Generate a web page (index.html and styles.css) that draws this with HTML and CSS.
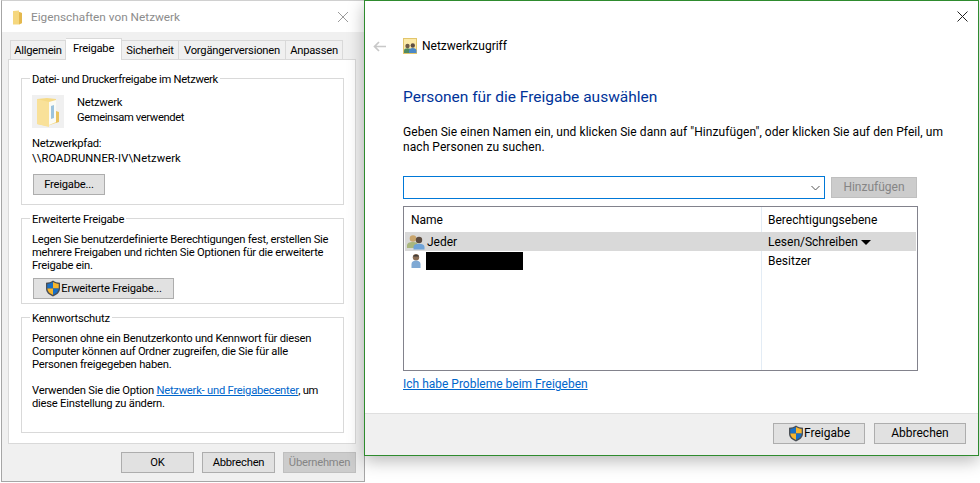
FILE: index.html
```html
<!DOCTYPE html>
<html lang="de">
<head>
<meta charset="utf-8">
<title>Netzwerk</title>
<link rel="stylesheet" href="styles.css">
</head>
<body>
<svg class="defs" width="0" height="0" aria-hidden="true">
  <defs>
    <symbol id="shield" viewBox="0 0 16 17">
      <path d="M8 .5C6 2 3.500 2.600 1 2.800v6c0 3.600 3 6.200 7 7.700 4-1.500 7-4.100 7-7.700v-6C12.500 2.600 10 2 8 .5z" fill="#4a4f55"/>
      <path d="M8 2C6.300 3.100 4.300 3.600 2.300 3.900V8.500H8z" fill="#1a6fc4"/>
      <path d="M8 2c1.700 1.100 3.700 1.600 5.700 1.900V8.500H8z" fill="#f7b52b"/>
      <path d="M2.300 8.500H8v6.500C4.800 13.700 2.500 11.500 2.300 8.500z" fill="#f7b52b"/>
      <path d="M13.700 8.500H8v6.500c3.200-1.300 5.500-3.500 5.700-6.500z" fill="#1a6fc4"/>
    </symbol>
    <symbol id="person" viewBox="0 0 12 16">
      <circle cx="6" cy="4.200" r="3.200" fill="#8a6d55"/>
      <path d="M3 3.500c1-2.500 5-2.500 6 0z" fill="#3d3a38"/>
      <path d="M1.500 15v-4c0-2.300 2-3.500 4.500-3.500s4.500 1.200 4.500 3.500v4z" fill="#7fa9d4"/>
    </symbol>
    <symbol id="people" viewBox="0 0 20 16">
      <circle cx="7" cy="4.500" r="3.300" fill="#c9a56c"/>
      <path d="M1 14v-2.500C1 9 3.500 8 7 8s5 1 5 3.500V14z" fill="#a9b77e"/>
      <circle cx="13" cy="6" r="3.200" fill="#5c4c40"/>
      <path d="M7.500 15.500v-2.500c0-2.300 2.300-3.300 5.500-3.300s5.500 1 5.500 3.300v2.500z" fill="#6fa3d8"/>
    </symbol>
  </defs>
</svg>

<section class="window props">
  <header class="props-title">
    <svg class="title-folder" width="11" height="15" viewBox="0 0 11 15" aria-hidden="true">
      <path d="M1 1l6-.500v1.500l3 1v10l-3 1.500H1z" fill="#f5d77e"/>
      <path d="M7 2l3 1v10l-3 1.500z" fill="#e4b84e"/>
    </svg>
    <span class="props-caption">Eigenschaften von Netzwerk</span>
    <svg class="props-close" width="12" height="12" viewBox="0 0 12 12" aria-hidden="true"><path d="M1 1l10 10M11 1L1 11" stroke="#9b9b9b" fill="none"/></svg>
  </header>

  <nav class="tabs">
    <span class="tab tab-general">Allgemein</span>
    <span class="tab tab-active">Freigabe</span>
    <span class="tab tab-security">Sicherheit</span>
    <span class="tab tab-versions">Vorgängerversionen</span>
    <span class="tab tab-custom">Anpassen</span>
  </nav>

  <div class="panel">
    <fieldset class="group group-share">
      <legend>Datei- und Druckerfreigabe im Netzwerk</legend>
      <div class="share-head">
        <div class="folder-box">
          <svg width="24" height="30" viewBox="0 0 24 30" aria-hidden="true">
            <path d="M1 2l10-1 9 1v24l-9 3-10-2z" fill="#f6da85"/>
            <path d="M13 5l7-2v22l-7 3z" fill="#fbfbf5"/>
            <path d="M15 9l3-1v13l-3 1z" fill="#9cc3dd"/>
            <path d="M20 14l3 1v10l-3 1z" fill="#e9c35f"/>
            <path d="M1 2l12 3v25L1 27z" fill="#f9e199"/>
          </svg>
        </div>
        <div class="share-name">
          <div>Netzwerk</div>
          <div class="share-status">Gemeinsam verwendet</div>
        </div>
      </div>
      <div class="share-path">
        <div>Netzwerkpfad:</div>
        <div class="unc">\\ROADRUNNER-IV\Netzwerk</div>
      </div>
      <button class="btn btn-share" type="button">Freigabe...</button>
    </fieldset>

    <fieldset class="group group-advanced">
      <legend>Erweiterte Freigabe</legend>
      <p class="copy">Legen Sie benutzerdefinierte Berechtigungen fest, erstellen Sie<br>mehrere Freigaben und richten Sie Optionen für die erweiterte<br>Freigabe ein.</p>
      <button class="btn btn-advanced" type="button"><svg class="shield" width="16" height="17"><use href="#shield"/></svg>Erweiterte Freigabe...</button>
    </fieldset>

    <fieldset class="group group-password">
      <legend>Kennwortschutz</legend>
      <p class="copy">Personen ohne ein Benutzerkonto und Kennwort für diesen<br>Computer können auf Ordner zugreifen, die Sie für alle<br>Personen freigegeben haben.</p>
      <p class="copy copy-second">Verwenden Sie die Option <a href="#" class="inline-link">Netzwerk- und Freigabecenter</a>, um<br>diese Einstellung zu ändern.</p>
    </fieldset>
  </div>

  <footer class="props-footer">
    <button class="btn btn-foot" type="button">OK</button>
    <button class="btn btn-foot" type="button">Abbrechen</button>
    <button class="btn btn-foot btn-disabled" type="button">Übernehmen</button>
  </footer>
</section>

<section class="window wizard">
  <div class="wizard-top">
    <svg width="11" height="11" viewBox="0 0 11 11" aria-hidden="true"><path d="M.5.5l10 10M10.500.5l-10 10" stroke="#222" fill="none"/></svg>
  </div>
  <div class="wizard-nav">
    <svg class="nav-back" width="13" height="11" viewBox="0 0 13 11" aria-hidden="true"><path d="M13 5.500H1.500M6 1L1.500 5.500 6 10" stroke="#c8c8c8" stroke-width="1.700" fill="none"/></svg>
    <svg class="nav-icon" width="14" height="16" viewBox="0 0 14 16" aria-hidden="true">
      <rect x=".5" y=".5" width="13" height="15" fill="#fbe9a8" stroke="#e2c56b"/>
      <circle cx="4.500" cy="8" r="2.200" fill="#6e5b47"/>
      <path d="M1 15v-2.500c0-1.500 1.500-2.300 3.500-2.300S8 11 8 12.500V15z" fill="#4f8a63"/>
      <circle cx="9.800" cy="7.500" r="2.200" fill="#5d4d42"/>
      <path d="M6 15v-2.500c0-1.500 1.700-2.500 3.800-2.500s3.700 1 3.700 2.500V15z" fill="#4a88c7"/>
    </svg>
    <span class="nav-title">Netzwerkzugriff</span>
  </div>

  <main class="wizard-body">
    <h1 class="heading">Personen für die Freigabe auswählen</h1>
    <p class="intro">Geben Sie einen Namen ein, und klicken Sie dann auf "Hinzufügen", oder klicken Sie auf den Pfeil, um<br>nach Personen zu suchen.</p>
    <div class="add-row">
      <div class="combo">
        <svg width="9" height="6" viewBox="0 0 9 6" aria-hidden="true"><path d="M.5 1l4 4 4-4" stroke="#555" fill="none"/></svg>
      </div>
      <button class="btn btn-add btn-disabled" type="button">Hinzufügen</button>
    </div>
    <div class="list">
      <div class="list-row list-header">
        <span class="cell-name">Name</span>
        <span class="cell-perm">Berechtigungsebene</span>
      </div>
      <div class="list-row row-selected">
        <span class="cell-name"><svg class="row-icon" width="20" height="16"><use href="#people"/></svg>Jeder</span>
        <span class="cell-perm">Lesen/Schreiben <i class="caret"></i></span>
      </div>
      <div class="list-row">
        <span class="cell-name"><svg class="row-icon row-icon-solo" width="12" height="16"><use href="#person"/></svg><span class="redacted"></span></span>
        <span class="cell-perm">Besitzer</span>
      </div>
      <div class="list-fill"><span class="fill-name"></span><span class="fill-perm"></span></div>
    </div>
    <a href="#" class="help-link">Ich habe Probleme beim Freigeben</a>
  </main>

  <footer class="wizard-footer">
    <button class="btn btn-wizard" type="button"><svg class="shield" width="16" height="17"><use href="#shield"/></svg>Freigabe</button>
    <button class="btn btn-wizard" type="button">Abbrechen</button>
  </footer>
</section>
</body>
</html>
```

FILE: styles.css
```css
* { box-sizing: border-box; }

html, body {
  margin: 0;
  width: 980px;
  height: 483px;
  overflow: hidden;
  background: #fff;
}

body {
  position: relative;
  font-family: Roboto, "Noto Sans", sans-serif;
  font-size: 11.200px;
  letter-spacing: -.22px;
  line-height: 13px;
  color: #000;
}

.defs { position: absolute; }

.window { position: absolute; }

.btn {
  display: flex;
  align-items: center;
  justify-content: center;
  height: 21px;
  margin: 0;
  padding: 0;
  font: inherit;
  letter-spacing: inherit;
  color: #000;
  background: #e1e1e1;
  border: 1px solid #adadad;
}

.btn-disabled {
  color: #858585;
  background: #ccc;
  border-color: #bfbfbf;
}

.shield { flex: none; }

/* Left properties dialog */
.props {
  left: 1px;
  top: 0;
  width: 364px;
  height: 482px;
  display: flex;
  flex-direction: column;
  background: #f0f0f0;
  border: 1px solid #a6a6a6;
  border-top-color: #d0d0d0;
}

.props-title {
  flex: none;
  height: 31px;
  display: flex;
  align-items: center;
  padding: 1px 0 0 10px;
  background: #fff;
}

.props-caption {
  margin-left: 8px;
  font-size: 11.800px;
  letter-spacing: 0;
  color: #8c8c8c;
}

.props-close { margin-left: auto; margin-right: 15px; }

.tabs {
  flex: none;
  height: 28px;
  display: flex;
  align-items: flex-end;
  padding-left: 8px;
  position: relative;
  z-index: 1;
}

.tab {
  height: 19px;
  margin-bottom: 1px;
  padding-top: 1px;
  display: flex;
  align-items: center;
  justify-content: center;
  border: 1px solid #d9d9d9;
  border-bottom: 0;
  border-left: 0;
  background: #f0f0f0;
}

.tab-general { width: 56px; border-left: 1px solid #d9d9d9; }
.tab-active {
  width: 56px;
  height: 22px;
  margin-bottom: 0;
  padding: 0 0 2px;
  background: #fff;
}
.tab-security { width: 57px; }
.tab-versions { width: 107px; }
.tab-custom { width: 57px; }

.panel {
  flex: none;
  width: 348px;
  height: 385px;
  margin-left: 6px;
  margin-top: -1px;
  padding: 11px 11px 0 12px;
  background: #fff;
  border: 1px solid #d9d9d9;
}

.group {
  margin: 0;
  padding: 0 0 0 10px;
  min-width: 0;
  border: 1px solid #d9d9d9;
}

.group legend {
  margin-left: -2px;
  padding: 2px 2px 0;
  line-height: 13px;
}

.group-share legend { letter-spacing: -.3px; }

.group + .group { margin-top: 6px; }

.group-share { height: 134px; }
.group-advanced { height: 93px; }
.group-password { height: 123px; }

.share-head {
  display: flex;
  margin-top: 9px;
}

.folder-box {
  width: 32px;
  height: 33px;
  display: flex;
  align-items: center;
  justify-content: center;
  background: #f0f0f0;
}

.share-name {
  margin-left: 13px;
  line-height: 15px;
}

.share-status { letter-spacing: -.38px; }

.share-path {
  margin-top: 8px;
  line-height: 15px;
}

.unc { letter-spacing: .1px; }

.btn-share { width: 72px; margin: 8px 0 0 1px; }

.copy { margin: 0; }

.group-advanced .copy { margin-top: 7px; }
.btn-advanced { width: 141px; margin: 6px 0 0 1px; }
.group-password .copy { margin-top: 7px; }
.group-password .copy-second { margin-top: 13px; }

.inline-link { color: #0066cc; }

.props-footer {
  display: flex;
  gap: 8px;
  margin-top: 8px;
  padding-left: 119px;
}

.btn-foot { width: 73px; }

/* Right sharing wizard */
.wizard {
  left: 364px;
  top: 0;
  width: 615px;
  height: 456px;
  display: flex;
  flex-direction: column;
  background: #fff;
  border: 1px solid #2e8b2e;
  box-shadow: 0 5px 16px rgba(0, 0, 0, .28);
  font-size: 12px;
  letter-spacing: 0;
  line-height: 15px;
}

.wizard-top {
  flex: none;
  height: 30px;
  display: flex;
  justify-content: flex-end;
  align-items: center;
  padding-right: 10px;
}

.wizard-nav {
  flex: none;
  height: 30px;
  display: flex;
  align-items: center;
  padding-left: 8px;
}

.nav-icon { margin-left: 17px; }
.nav-title { margin-left: 5px; }

.wizard-body {
  flex: 1;
  padding: 26px 0 0 38px;
}

.heading {
  margin: 0;
  font-size: 15.500px;
  font-weight: 400;
  line-height: 20px;
  color: #003399;
}

.intro {
  margin: 18px 0 0;
  white-space: nowrap;
  letter-spacing: .07px;
}

.add-row {
  display: flex;
  align-items: center;
  gap: 6px;
  margin-top: 21px;
}

.combo {
  width: 422px;
  height: 23px;
  display: flex;
  align-items: center;
  justify-content: flex-end;
  padding-right: 4px;
  border: 1px solid #0078d7;
}

.btn-add { width: 86px; }

.list {
  width: 515px;
  height: 165px;
  margin-top: 7px;
  display: flex;
  flex-direction: column;
  border: 1px solid #82828c;
  padding: 0 1px;
}

.list-row {
  flex: none;
  display: flex;
  height: 19px;
  align-items: center;
}

.list-header { height: 25px; }

.row-selected { background: #d9d9d9; }

.cell-name {
  width: 357px;
  padding-left: 6px;
  display: flex;
  align-items: center;
  height: 100%;
  border-right: 1px solid #e3ecf5;
}

.cell-perm {
  padding: 1px 0 0 6px;
  display: flex;
  align-items: center;
}

.list-header .cell-name { padding-top: 1px; }
.row-selected .cell-name { border-right-color: #d9d9d9; padding: 1px 0 0 1px; }

.row-icon { margin-right: 1px; }
.row-icon-solo { margin: 0 4px 0 0; }

.list-row:nth-child(3) .cell-name { padding-left: 5px; }

.redacted {
  width: 97px;
  height: 18px;
  background: #000;
}

.caret {
  width: 0;
  height: 0;
  margin-left: 3px;
  border-style: solid;
  border-width: 5px 5px 0;
  border-color: #000 transparent transparent;
}

.list-fill { flex: 1; display: flex; }
.fill-name { width: 357px; border-right: 1px solid #e3ecf5; }

.help-link {
  display: block;
  margin-top: 6px;
  color: #0066cc;
}

.wizard-footer {
  flex: none;
  height: 42px;
  display: flex;
  justify-content: flex-end;
  gap: 9px;
  padding: 9px 12px 0 0;
  background: #f0f0f0;
  border-top: 1px solid #dfdfdf;
}

.btn-wizard { width: 92px; }
```
